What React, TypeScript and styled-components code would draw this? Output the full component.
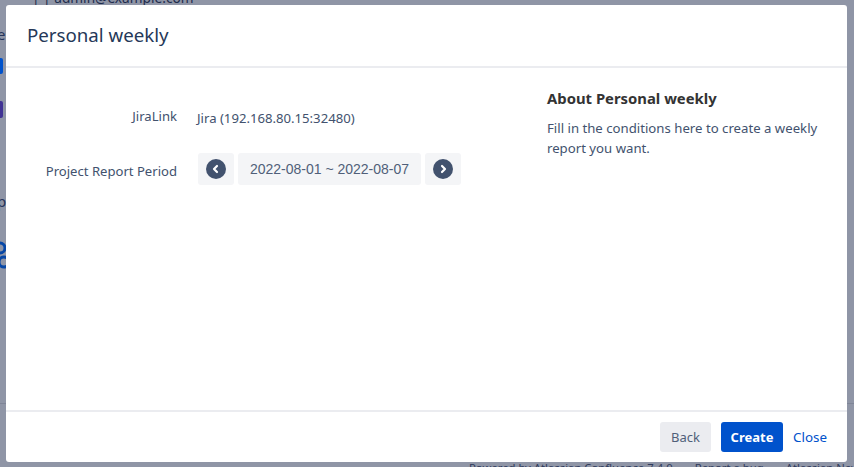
import React from "react";
import styled, { createGlobalStyle } from "styled-components";

const Global = createGlobalStyle`
  html, body { margin: 0; padding: 0; width: 854px; height: 467px; overflow: hidden; }
  body { font-family: "Noto Sans", "Open Sans", "Liberation Sans", sans-serif; background: #8f95a6; }
`;

const Page = styled.div`
  position: relative;
  width: 854px;
  height: 467px;
  overflow: hidden;
  background: #8f95a6;
`;

const BackTop = styled.div`
  height: 5px;
  padding-left: 32px;
  overflow: hidden;
  font-size: 13.7px;
  line-height: 1px;
  color: #1e2c4d;
  white-space: nowrap;
`;

const BackTopText = styled.span`
  display: block;
  margin-top: -3px;
`;

const BackFooter = styled.div`
  position: absolute;
  left: 469px;
  top: 462px;
  height: 5px;
  overflow: hidden;
  display: flex;
  gap: 9.5px;
  font-size: 11.3px;
  line-height: 11px;
  color: #2f3b5c;
  white-space: nowrap;
`;

const BackRule = styled.div`
  position: absolute;
  left: 0;
  top: 403px;
  width: 854px;
  height: 1px;
  background: #7f8597;
`;

const SideMark = styled.div<{ $top: number; $color: string; $h: number }>`
  position: absolute;
  left: 0;
  top: ${(p) => p.$top}px;
  width: 3px;
  height: ${(p) => p.$h}px;
  border-radius: 0 2px 2px 0;
  background: ${(p) => p.$color};
`;

const SideIcon = styled.svg`
  position: absolute;
  left: 0;
  top: 241px;
`;

const SideLetter = styled.span<{ $top: number }>`
  position: absolute;
  left: -3px;
  top: ${(p) => p.$top}px;
  font-size: 15px;
  line-height: 18px;
  color: #26345a;
`;

const Dialog = styled.section`
  position: absolute;
  left: 6px;
  top: 5px;
  width: 841px;
  height: 457px;
  display: flex;
  flex-direction: column;
  background: #fff;
  border-radius: 3px;
`;

const Header = styled.header`
  height: 61px;
  flex: none;
  display: flex;
  align-items: center;
  padding: 0 0 2px 21px;
  box-sizing: content-box;
  height: 59px;
  border-bottom: 2px solid #ebecf0;
`;

const Title = styled.h2`
  margin: 0;
  font-size: 18.7px;
  font-weight: 400;
  color: #253858;
`;

const Body = styled.div`
  flex: 1;
  display: grid;
  grid-template-columns: 541px 1fr;
  min-height: 0;
`;

const Form = styled.div`
  display: flex;
  flex-direction: column;
  padding-top: 38px;
  gap: 25px;
`;

const Row = styled.div`
  display: flex;
  align-items: flex-start;
  gap: 20px;
`;

const Label = styled.span<{ $drop: number }>`
  width: 171px;
  margin-top: ${(p) => p.$drop}px;
  text-align: right;
  font-size: 13.1px;
  line-height: 20px;
  color: #42526e;
`;

const Value = styled.span`
  margin-top: 2px;
  font-size: 13.15px;
  line-height: 20px;
  color: #42526e;
`;

const Picker = styled.div`
  display: flex;
  gap: 4px;
  margin-left: 1px;
`;

const NavCell = styled.div`
  width: 36px;
  height: 32px;
  display: flex;
  align-items: center;
  justify-content: center;
  background: #f4f5f7;
  border-radius: 3px;
`;

const DateCell = styled.div`
  width: 183px;
  height: 32px;
  display: flex;
  align-items: center;
  justify-content: center;
  background: #f4f5f7;
  border-radius: 3px;
  font-family: "Liberation Sans", Arial, sans-serif;
  font-size: 14px;
  color: #505f79;
`;

const Aside = styled.aside`
  padding: 20px 20px 0 0;
`;

const AsideTitle = styled.h3`
  margin: 0 0 10px;
  font-size: 14.85px;
  line-height: 20px;
  font-weight: 700;
  color: #333;
`;

const AsideText = styled.p`
  margin: 0;
  font-size: 13.2px;
  line-height: 20px;
  color: #42526e;
`;

const Footer = styled.footer`
  height: 50px;
  flex: none;
  display: flex;
  align-items: center;
  justify-content: flex-end;
  gap: 10px;
  padding-right: 20px;
  border-top: 2px solid #ebecf0;
`;

const Back = styled.button`
  width: 51px;
  height: 30px;
  border: 0;
  border-radius: 3px;
  background: #ebecf0;
  font: 400 13px "Noto Sans", sans-serif;
  color: #505f79;
  padding: 0;
`;

const Create = styled.button`
  width: 62px;
  height: 30px;
  border: 0;
  border-radius: 3px;
  background: #0052cc;
  font: 700 13px "Noto Sans", sans-serif;
  color: #fff;
  padding: 0;
`;

const CloseLink = styled.a`
  font-size: 13.4px;
  color: #0052cc;
`;

const Arrow = ({ dir }: { dir: "left" | "right" }) => (
  <svg width="20" height="20" viewBox="0 0 20 20" aria-hidden="true">
    <circle cx="10" cy="10" r="10" fill="#42526e" />
    <path
      d={dir === "left" ? "M11 7 8 10l3 3" : "M9 7l3 3-3 3"}
      fill="none"
      stroke="#fff"
      strokeWidth="2.2"
      strokeLinecap="round"
      strokeLinejoin="round"
    />
  </svg>
);

export default function App() {
  return (
    <Page>
      <Global />
      <BackTop>
        <BackTopText>| | admin@example.com</BackTopText>
      </BackTop>
      <BackRule />
      <SideMark $top={58} $h={16} $color="#0052cc" />
      <SideMark $top={101} $h={17} $color="#403294" />
      <SideLetter $top={25}>e</SideLetter>
      <SideLetter $top={192}>p</SideLetter>
      <SideIcon width="6" height="30" viewBox="0 0 6 30" aria-hidden="true">
        <circle cx="0" cy="7" r="5" fill="none" stroke="#0747a6" strokeWidth="3" />
        <circle cx="4" cy="21" r="5" fill="none" stroke="#0747a6" strokeWidth="3" />
      </SideIcon>
      <BackFooter>
        <span>Powered by Atlassian Confluence 7.4.0</span>
        <span>·</span>
        <span>Report a bug</span>
        <span>·</span>
        <span>Atlassian News</span>
      </BackFooter>
      <Dialog>
        <Header>
          <Title>Personal weekly</Title>
        </Header>
        <Body>
          <Form>
            <Row>
              <Label $drop={0}>JiraLink</Label>
              <Value>Jira (192.168.80.15:32480)</Value>
            </Row>
            <Row>
              <Label $drop={8}>Project Report Period</Label>
              <Picker>
                <NavCell><Arrow dir="left" /></NavCell>
                <DateCell>2022-08-01 ~ 2022-08-07</DateCell>
                <NavCell><Arrow dir="right" /></NavCell>
              </Picker>
            </Row>
          </Form>
          <Aside>
            <AsideTitle>About Personal weekly</AsideTitle>
            <AsideText>Fill in the conditions here to create a weekly report you want.</AsideText>
          </Aside>
        </Body>
        <Footer>
          <Back>Back</Back>
          <Create>Create</Create>
          <CloseLink>Close</CloseLink>
        </Footer>
      </Dialog>
    </Page>
  );
}
